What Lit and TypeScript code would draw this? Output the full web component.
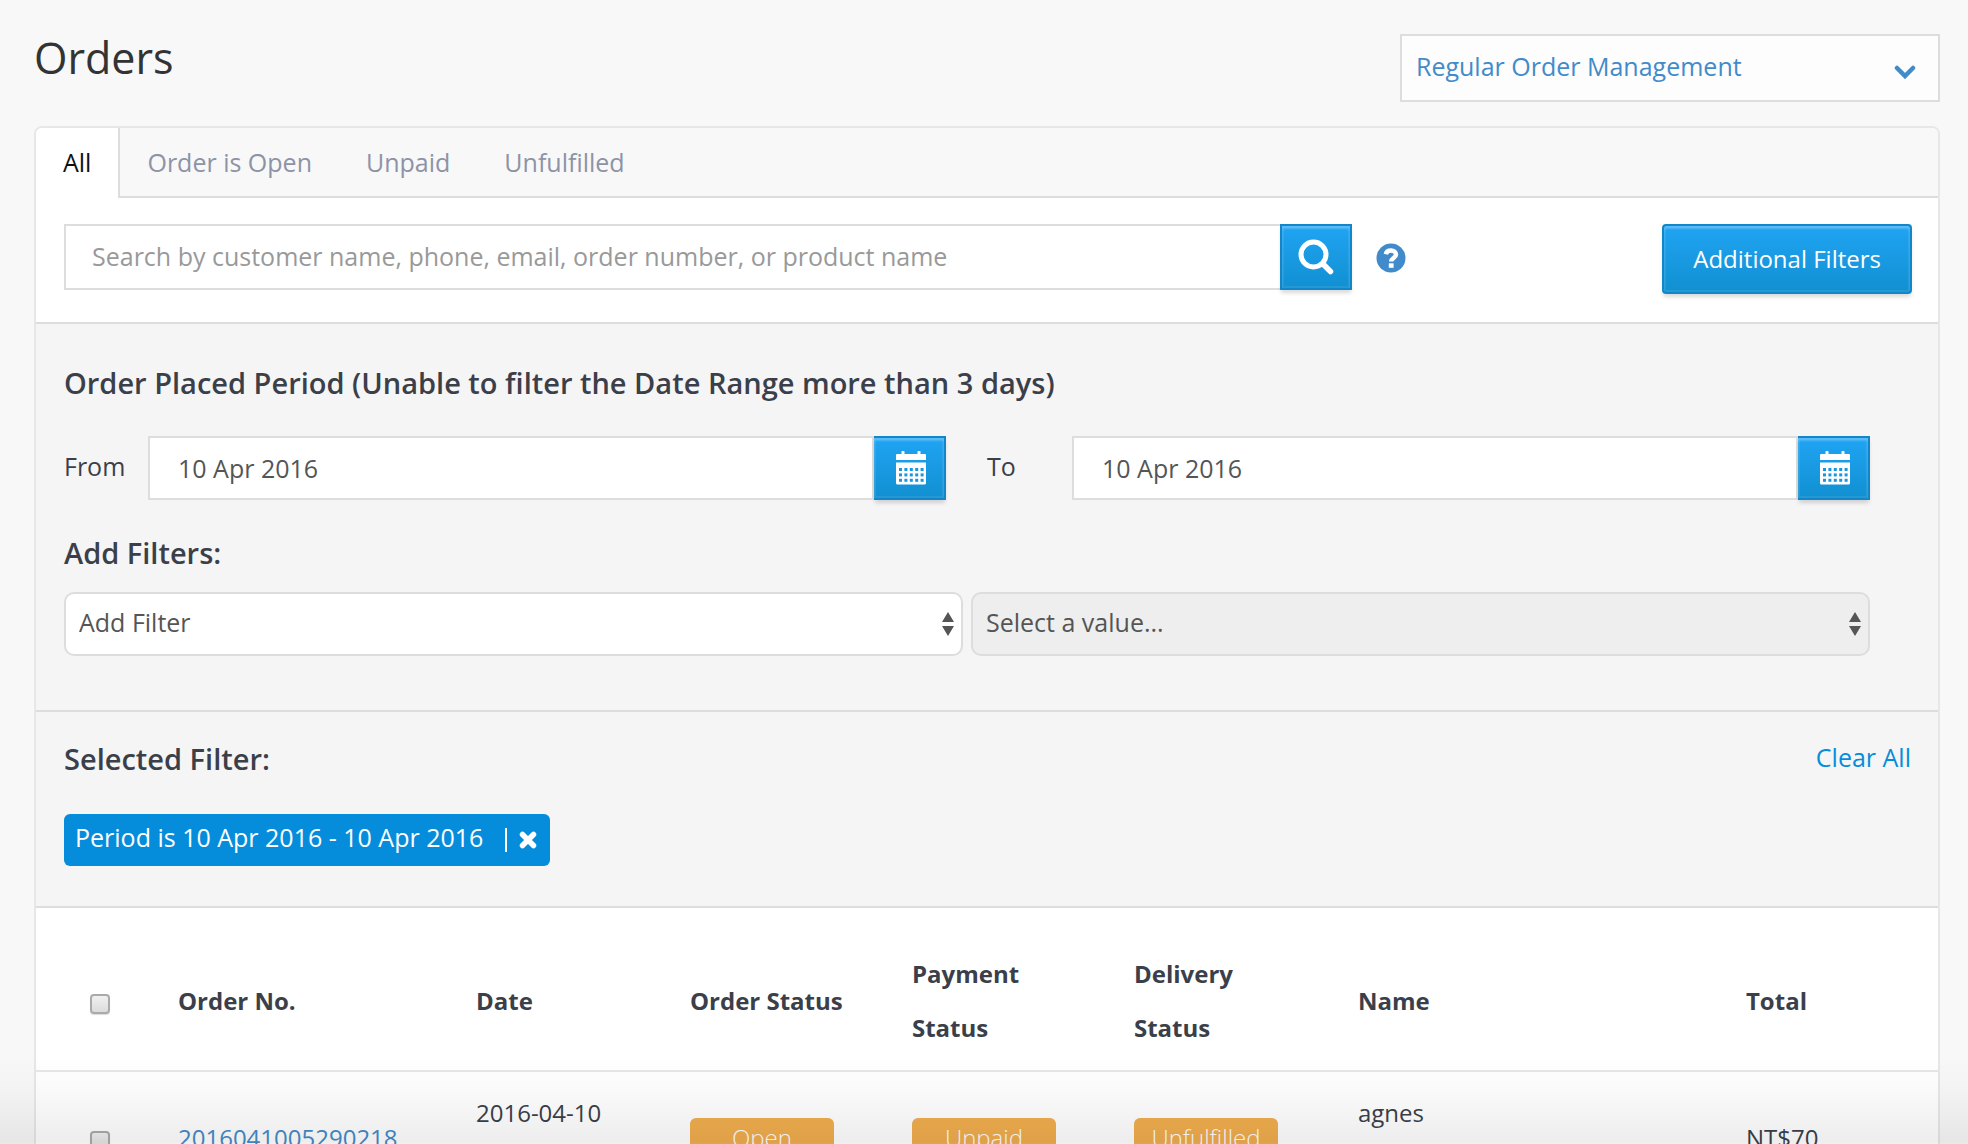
import { LitElement, html, css, svg } from "lit";
import { customElement, property, state } from "lit/decorators.js";
import { classMap } from "lit/directives/class-map.js";

interface Order {
  no: string;
  date: string;
  order: string;
  payment: string;
  delivery: string;
  name: string;
  total: string;
}

const TABS = ["All", "Order is Open", "Unpaid", "Unfulfilled"];

const ORDERS: Order[] = [
  {
    no: "2016041005290218",
    date: "2016-04-10",
    order: "Open",
    payment: "Unpaid",
    delivery: "Unfulfilled",
    name: "agnes",
    total: "NT$70",
  },
];

const searchIcon = html`<svg width="36" height="36" viewBox="0 0 36 36" fill="none" stroke="#fff" aria-hidden="true">
  <circle cx="15.500" cy="15.500" r="12.500" stroke-width="5" />
  <path d="M25 25l7.500 7.500" stroke-width="5.500" stroke-linecap="round" />
</svg>`;

const helpIcon = html`<svg width="30" height="30" viewBox="0 0 30 30" aria-hidden="true">
  <circle cx="15" cy="15" r="14.500" fill="#428bca" />
  <path d="M9.800 11.200c.6-2.600 2.500-3.600 5.200-3.600 3.100 0 5 1.500 5 3.900 0 3.500-4.800 3.600-4.800 7" fill="none" stroke="#fff" stroke-width="4.500" />
  <rect x="12.800" y="20.300" width="4.800" height="4.500" fill="#fff" />
</svg>`;

const chevronIcon = html`<svg width="22" height="14" viewBox="0 0 22 14" aria-hidden="true">
  <path d="M3 3l8 8 8-8" fill="none" stroke="#428bca" stroke-width="4.500" stroke-linecap="round" />
</svg>`;

const closeIcon = html`<svg width="18" height="18" viewBox="0 0 18 18" aria-hidden="true">
  <path d="M3.500 3.500l11 11M14.500 3.500l-11 11" stroke="#fff" stroke-width="5.500" stroke-linecap="round" />
</svg>`;

const holes = [0, 1, 2].flatMap((r) =>
  [0, 1, 2, 3, 4].map((c) => svg`<rect x=${3 + c * 5.4} y=${17 + r * 5.4} width="3" height="3" fill="#1897e0" />`),
);

const calendarIcon = html`<svg width="30" height="34" viewBox="0 0 30 34" aria-hidden="true">
  <path d="M1 3h4.500V1a1.500 1.500 0 0 1 3 0v2h13V1a1.500 1.500 0 0 1 3 0v2H29a1 1 0 0 1 1 1v5H0V4a1 1 0 0 1 1-1z" fill="#fff" />
  <path d="M0 11.500h30V32a1.500 1.500 0 0 1-1.500 1.500h-27A1.500 1.500 0 0 1 0 32z" fill="#fff" />
  ${holes}
</svg>`;

const controls = css`
  * {
    box-sizing: border-box;
  }
  button,
  input,
  select {
    margin: 0;
    font: inherit;
    color: inherit;
  }
  button {
    cursor: pointer;
  }
  svg {
    display: block;
    flex: none;
  }
  .primary {
    display: flex;
    align-items: center;
    justify-content: center;
    padding: 0;
    border: 2px solid #1286c8;
    background: linear-gradient(#20a4f3, #1190d1);
    box-shadow:
      inset 0 3px 2px rgba(255, 255, 255, 0.2),
      inset 0 0 0 2px rgba(255, 255, 255, 0.08),
      0 4px 4px -1px rgba(0, 0, 0, 0.15);
    color: #fff;
  }
`;

@customElement("date-field")
class DateField extends LitElement {
  static styles = [
    controls,
    css`
      :host {
        display: flex;
        min-width: 0;
      }
      .input {
        flex: 1;
        min-width: 0;
        height: 64px;
        padding: 0 28px;
        border: 2px solid #ddd;
        border-radius: 0;
        background: #fff;
        color: #555;
      }
      .primary {
        width: 72px;
        height: 64px;
        padding-left: 3px;
        border-left: 0;
      }
    `,
  ];
  @property() label = "";
  @property() value = "";

  render() {
    return html`<input class="input" type="text" aria-label=${this.label} .value=${this.value} />
      <button class="primary" type="button" aria-label="Pick date">${calendarIcon}</button>`;
  }
}

@customElement("app-root")
class AppRoot extends LitElement {
  static styles = [
    controls,
    css`
      :host {
        display: block;
        position: relative;
        height: 100vh;
        overflow: hidden;
        background: #f8f8f8;
        color: #3b3f4a;
        font: 25px/36px "Open Sans", "Noto Sans", sans-serif;
      }
      .page {
        padding: 34px 28px 0 34px;
      }
      .head {
        display: flex;
        justify-content: space-between;
        align-items: flex-start;
        margin-bottom: 24px;
      }
      .title {
        margin: 0;
        font-size: 43px;
        line-height: 48px;
        font-weight: 400;
        color: #333;
      }
      .mode {
        display: flex;
        justify-content: space-between;
        align-items: center;
        width: 540px;
        height: 68px;
        padding: 0 22px 4px 14px;
        border: 2px solid #ddd;
        background: #fdfdfd;
        color: #428bca;
        text-align: left;
      }
      .mode svg {
        margin-top: 12px;
      }
      .panel {
        border: 2px solid #e7e7e7;
        border-radius: 8px 8px 0 0;
        background: #fff;
        overflow: hidden;
      }
      .tabs {
        display: flex;
        background: #f8f8f8;
        box-shadow: inset 0 -2px #ddd;
      }
      .tab {
        height: 70px;
        padding: 0 27px 2px;
        border: 0;
        background: none;
        color: #8d93a6;
      }
      .tab.active {
        border-right: 2px solid #ddd;
        background: #fff;
        color: #111;
      }
      .search {
        display: flex;
        align-items: flex-start;
        padding: 26px 26px 28px 28px;
        border-bottom: 2px solid #ddd;
      }
      .query {
        width: 1216px;
        flex: 0 1 auto;
        min-width: 0;
        height: 66px;
        padding: 0 26px 2px;
        border: 2px solid #ddd;
        border-right: 0;
        border-radius: 0;
        background: #fff;
      }
      .query::placeholder {
        color: #999;
        opacity: 1;
      }
      .go {
        width: 72px;
        height: 66px;
      }
      .help {
        margin: 19px auto 0 24px;
        padding: 0;
        border: 0;
        background: none;
      }
      .more {
        height: 70px;
        padding: 0 29px;
        border-radius: 4px;
        font-size: 24px;
        font-weight: 500;
      }
      .filters {
        padding: 39px 68px 54px 28px;
        border-bottom: 2px solid #ddd;
        background: #f5f5f5;
      }
      .heading {
        margin: 0;
        font-size: 29px;
        line-height: 40px;
        font-weight: 600;
      }
      .dates {
        display: grid;
        grid-template-columns: 84px 1fr 126px 1fr;
        align-items: center;
        margin: 33px 0;
      }
      .to {
        padding-left: 41px;
      }
      .dates label {
        padding-bottom: 4px;
      }
      .selects {
        display: grid;
        grid-template-columns: 1fr 1fr;
        gap: 8px;
        margin-top: 19px;
      }
      .selectbox {
        display: grid;
        align-items: center;
      }
      .selectbox > * {
        grid-area: 1 / 1;
      }
      .selectbox svg {
        justify-self: end;
        margin-right: 9px;
        pointer-events: none;
      }
      .select {
        appearance: none;
        width: 100%;
        height: 64px;
        padding: 0 30px 4px 13px;
        border: 2px solid #ddd;
        border-radius: 10px;
        background: #fff;
        color: #555;
        opacity: 1;
      }
      .select:disabled {
        background: #eee;
      }
      .chosen {
        display: flex;
        justify-content: space-between;
        align-items: flex-start;
        padding: 27px 27px 40px 28px;
        border-bottom: 2px solid #ddd;
        background: #f5f5f5;
      }
      .clear {
        color: #058ddc;
        text-decoration: none;
      }
      .chip {
        display: flex;
        align-items: center;
        height: 52px;
        margin-top: 35px;
        padding: 0 13px 6px 11px;
        border-radius: 6px;
        background: #058ddc;
        color: #fff;
      }
      .bar {
        width: 2px;
        height: 24px;
        margin: 6px 12px 0 22px;
        background: #fff;
      }
      .remove {
        padding: 6px 0 0;
        border: 0;
        background: none;
      }
      .table {
        width: 100%;
        margin-top: 24px;
        border-collapse: collapse;
        table-layout: fixed;
        font-size: 24px;
      }
      th,
      td {
        padding: 15px 32px 15px 16px;
        border-bottom: 2px solid #e7e7e7;
        text-align: left;
      }
      th {
        line-height: 54px;
        font-weight: 700;
      }
      td {
        height: 134px;
        padding: 16px;
        line-height: 50px;
      }
      th.pick,
      td.pick {
        padding: 0 0 0 54px;
      }
      td.top {
        vertical-align: top;
      }
      .link {
        color: #428bca;
        text-decoration: none;
      }
      .badge {
        display: block;
        width: 144px;
        height: 40px;
        border-radius: 6px;
        background: #f0ad4e;
        color: #fff;
        font-weight: 300;
        line-height: 40px;
        text-align: center;
      }
      .check {
        appearance: none;
        display: block;
        width: 20px;
        height: 20px;
        margin-top: 6px;
        border: 2px solid #aaa;
        border-radius: 4px;
        background: linear-gradient(#f0f0f0, #dcdcdc);
        box-shadow: 0 1px 1px rgba(0, 0, 0, 0.15);
      }
      .w-pick {
        width: 6.625%;
      }
      .w-no {
        width: 15.668%;
      }
      .w-date {
        width: 11.251%;
      }
      .w-state {
        width: 11.672%;
      }
      .w-last {
        width: 11.777%;
      }
      .w-name {
        width: 20.4%;
      }
      .shade {
        position: absolute;
        inset: auto 0 0;
        height: 90px;
        background: linear-gradient(rgba(0, 0, 0, 0), rgba(0, 0, 0, 0.02) 40%, rgba(0, 0, 0, 0.07));
        border-bottom: 2px solid rgba(0, 0, 0, 0.06);
        pointer-events: none;
      }
    `,
  ];

  @state() private tab = 0;

  private arrows() {
    return html`<svg width="12" height="24" viewBox="0 0 12 24" aria-hidden="true">
      <path d="M6 0l6 10H0zM6 24l6-10H0z" fill="#555" />
    </svg>`;
  }

  render() {
    return html`
      <main class="page">
        <header class="head">
          <h1 class="title">Orders</h1>
          <button class="mode" type="button"><span>Regular Order Management</span>${chevronIcon}</button>
        </header>
        <section class="panel">
          <nav class="tabs">
            ${TABS.map(
              (t, i) =>
                html`<button
                  type="button"
                  class=${classMap({ tab: true, active: i === this.tab })}
                  @click=${() => (this.tab = i)}
                >${t}</button>`,
            )}
          </nav>
          <form class="search" @submit=${(e: Event) => e.preventDefault()}>
            <input
              class="query"
              type="text"
              aria-label="Search orders"
              placeholder="Search by customer name, phone, email, order number, or product name"
            />
            <button class="primary go" aria-label="Search">${searchIcon}</button>
            <button class="help" type="button" aria-label="Help">${helpIcon}</button>
            <button class="primary more" type="button">Additional Filters</button>
          </form>
          <div class="filters">
            <h2 class="heading">Order Placed Period (Unable to filter the Date Range more than 3 days)</h2>
            <div class="dates">
              <label for="from">From</label>
              <date-field id="from" label="From" value="10 Apr 2016"></date-field>
              <label class="to" for="to">To</label>
              <date-field id="to" label="To" value="10 Apr 2016"></date-field>
            </div>
            <h2 class="heading">Add Filters:</h2>
            <div class="selects">
              <div class="selectbox">
                <select class="select" aria-label="Filter"><option>Add Filter</option></select>${this.arrows()}
              </div>
              <div class="selectbox">
                <select class="select" aria-label="Value" disabled><option>Select a value...</option></select>${this.arrows()}
              </div>
            </div>
          </div>
          <div class="chosen">
            <div>
              <h2 class="heading">Selected Filter:</h2>
              <div class="chip">
                <span>Period is 10 Apr 2016 - 10 Apr 2016</span>
                <span class="bar"></span>
                <button class="remove" type="button" aria-label="Remove filter">${closeIcon}</button>
              </div>
            </div>
            <a class="clear" href="#">Clear All</a>
          </div>
          <table class="table">
            <colgroup>
              <col class="w-pick" />
              <col class="w-no" />
              <col class="w-date" />
              <col class="w-state" />
              <col class="w-state" />
              <col class="w-last" />
              <col class="w-name" />
              <col />
            </colgroup>
            <thead>
              <tr>
                <th class="pick"><input class="check" type="checkbox" aria-label="Select all orders" /></th>
                <th>Order No.</th>
                <th>Date</th>
                <th>Order Status</th>
                <th>Payment Status</th>
                <th>Delivery Status</th>
                <th>Name</th>
                <th>Total</th>
              </tr>
            </thead>
            <tbody>
              ${ORDERS.map(
                (o) => html`<tr>
                  <td class="pick"><input class="check" type="checkbox" aria-label="Select order" /></td>
                  <td><a class="link" href="#">${o.no}</a></td>
                  <td class="top">${o.date}</td>
                  <td><span class="badge">${o.order}</span></td>
                  <td><span class="badge">${o.payment}</span></td>
                  <td><span class="badge">${o.delivery}</span></td>
                  <td class="top">${o.name}</td>
                  <td>${o.total}</td>
                </tr>`,
              )}
            </tbody>
          </table>
        </section>
      </main>
      <div class="shade"></div>
    `;
  }
}
